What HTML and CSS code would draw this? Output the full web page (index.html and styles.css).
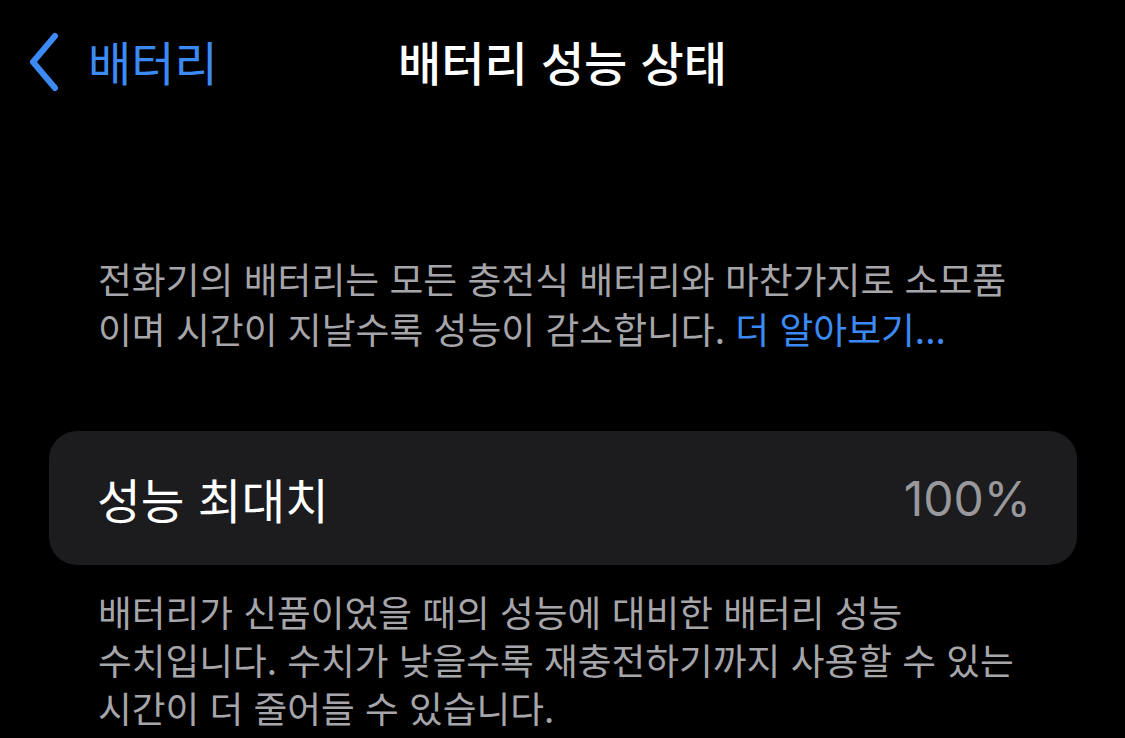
FILE: index.html
```html
<!DOCTYPE html>
<html lang="ko">
<head>
    <meta charset="UTF-8">
    <meta name="viewport" content="width=device-width, initial-scale=1.0">
    <title>배터리 성능 상태</title>
    <link rel="stylesheet" href="styles.css">
</head>
<body>
    <header class="nav-bar">
        <a class="back-link" href="#">
            <svg class="chevron" width="34" height="60" viewBox="0 0 34 60">
                <path d="M27 4 L5 30 L27 56" fill="none" stroke="currentColor" stroke-width="6" stroke-linecap="round" stroke-linejoin="round"/>
            </svg>
            <span>배터리</span>
        </a>
        <h1 class="nav-title">배터리 성능 상태</h1>
        <div></div>
    </header>

    <main class="content">
        <p class="note note-top">
            전화기의 배터리는 모든 충전식 배터리와 마찬가지로 소모품<br>
            이며 시간이 지날수록 성능이 감소합니다. <a class="more-link" href="#">더 알아보기...</a>
        </p>

        <section class="group">
            <div class="row">
                <span class="row-label">성능 최대치</span>
                <span class="row-value">100%</span>
            </div>
        </section>

        <p class="note note-bottom">
            배터리가 신품이었을 때의 성능에 대비한 배터리 성능<br>
            수치입니다. 수치가 낮을수록 재충전하기까지 사용할 수 있는<br>
            시간이 더 줄어들 수 있습니다.
        </p>
    </main>
</body>
</html>
```

FILE: styles.css
```css
:root {
    --bg-color: #000000;
    --group-bg: #1c1c1e;
    --label-color: #ffffff;
    --secondary-color: #a5a5aa;
    --value-color: #98989d;
    --tint-color: #3c8af5;
}

* {
    margin: 0;
    padding: 0;
    box-sizing: border-box;
}

body {
    background: var(--bg-color);
    color: var(--label-color);
    font-family: "Noto Sans CJK KR", "Noto Sans", sans-serif;
    width: 1125px;
    height: 738px;
    overflow: hidden;
}

a {
    text-decoration: none;
    color: var(--tint-color);
}

/* top navigation */
.nav-bar {
    display: grid;
    grid-template-columns: 1fr auto 1fr;
    align-items: center;
    height: 120px;
    padding: 0 28px;
}

.back-link {
    display: flex;
    align-items: center;
    gap: 26px;
    font-size: 47px;
    line-height: 1;
}

.chevron {
    display: block;
    margin-top: 4px;
}

.nav-title {
    font-size: 47px;
    font-weight: 500;
    line-height: 1;
}

/* body */
.content {
    padding: 133px 48px 0 49px;
}

.note {
    color: var(--secondary-color);
    font-size: 36.8px;
    line-height: 50px;
    padding-left: 49px;
    white-space: nowrap;
}

.note-top {
    margin-bottom: 78px;
}

.more-link {
    color: var(--tint-color);
}

.group {
    background: var(--group-bg);
    border-radius: 28px;
}

.row {
    display: flex;
    justify-content: space-between;
    align-items: center;
    height: 134px;
    padding: 0 46px 0 48px;
}

.row-label {
    font-size: 47.5px;
}

.row-value {
    font-family: Inter, "Noto Sans", sans-serif;
    font-size: 48px;
    color: var(--value-color);
}

.note-bottom {
    margin-top: 22px;
    line-height: 48px;
    font-size: 36.7px;
}
```
